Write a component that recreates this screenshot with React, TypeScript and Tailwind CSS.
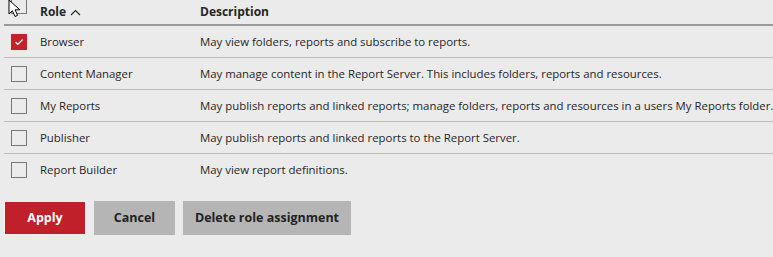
const roles = [
  { name: "Browser", desc: "May view folders, reports and subscribe to reports.", checked: true },
  { name: "Content Manager", desc: "May manage content in the Report Server. This includes folders, reports and resources.", checked: false },
  { name: "My Reports", desc: "May publish reports and linked reports; manage folders, reports and resources in a users My Reports folder.", checked: false },
  { name: "Publisher", desc: "May publish reports and linked reports to the Report Server.", checked: false },
  { name: "Report Builder", desc: "May view report definitions.", checked: false },
];

function Checkbox({ checked }: { checked: boolean }) {
  if (checked) {
    return (
      <div className="flex h-4 w-4 items-center justify-center bg-[#c4212b]">
        <svg width="10" height="8" viewBox="0 0 10 8" fill="none">
          <path d="M1.5 4.2 L3.8 6.3 L8.6 1.6" stroke="white" strokeWidth="1.2" />
        </svg>
      </div>
    );
  }
  return <div className="h-4 w-4 border border-[#777] bg-[#ececec]" />;
}

export default function App() {
  return (
    <div
      className="h-[257px] w-[773px] overflow-hidden bg-[#ebebeb] text-[11.4px] text-[#262626]"
      style={{ fontFamily: '"Open Sans", "Segoe UI", sans-serif' }}
    >
      <div className="pl-1">
        {/* header */}
        <div className="relative flex h-[26px] items-center border-b-2 border-[#9a9a9a] text-[12px]">
          <div className="relative w-9 shrink-0 self-stretch">
            <div className="absolute left-[7px] top-[-4px] h-[18px] w-4 border border-[#777]" />
            <svg className="absolute left-[4px] top-[-1px]" width="16" height="19" viewBox="0 0 16 19">
              <path d="M1 1 L1 15 L4.4 11.8 L7 17.5 L9.6 16.4 L7.1 10.8 L11.8 10.8 Z" fill="white" stroke="black" strokeWidth="1" strokeLinejoin="round" />
            </svg>
          </div>
          <div className="flex w-[160px] shrink-0 items-center gap-1 font-bold">
            Role
            <svg width="11" height="7" viewBox="0 0 11 7" fill="none">
              <path d="M1 6 L5.5 1.5 L10 6" stroke="#262626" strokeWidth="1.1" />
            </svg>
          </div>
          <div className="font-bold">Description</div>
        </div>
        {roles.map((r, i) => (
          <div
            key={r.name}
            className={
              "flex h-[32px] items-center " +
              (i < roles.length - 1 ? "border-b border-[#bdbdbd]" : "")
            }
          >
            <div className="flex w-9 shrink-0 pl-[7px]">
              <Checkbox checked={r.checked} />
            </div>
            <div className="w-[160px] shrink-0 whitespace-nowrap">{r.name}</div>
            <div className="whitespace-nowrap">{r.desc}</div>
          </div>
        ))}
        <div className="mt-[15px] flex gap-2">
          <button className="h-[34px] w-[82px] border border-[#f2f2f2] bg-[#c0202a] text-[12.5px] font-bold text-white">
            Apply
          </button>
          <button className="h-[34px] w-[81px] bg-[#b5b5b5] text-[12.5px] font-bold text-[#222]">
            Cancel
          </button>
          <button className="h-[34px] w-[168px] bg-[#b5b5b5] text-[12.5px] font-bold text-[#222]">
            Delete role assignment
          </button>
        </div>
      </div>
    </div>
  );
}
